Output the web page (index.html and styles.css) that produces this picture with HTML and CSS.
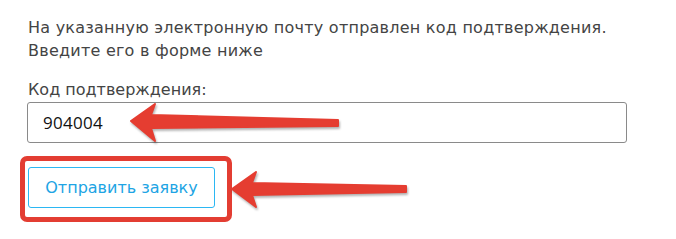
FILE: index.html
```html
<!DOCTYPE html>
<html lang="ru">

<head>
    <meta charset="utf-8">
    <link rel="stylesheet" href="styles.css">
</head>

<body>
    <div class="page">
        <p class="notice">На указанную электронную почту отправлен код подтверждения.<br>Введите его в форме ниже</p>
        <form class="confirm">
            <label class="confirm-label" for="code">Код подтверждения:</label>
            <input class="confirm-input" id="code" type="text" value="904004">
            <button class="confirm-btn" type="button">Отправить заявку</button>
        </form>
    </div>

    <!-- пометки поверх скриншота -->
    <span class="mark-box"></span>
    <svg class="marks" width="676" height="239" viewBox="0 0 676 239">
        <polygon class="arrow" points="131,121 155,104 151,115 338,120 338,126 151,128 155,141" />
        <polygon class="arrow" points="232,189 256,172 252,183 406,186 406,192 252,195 256,207" />
    </svg>
</body>

</html>
```

FILE: styles.css
```css
body {
    margin: 0;
    background: #fff;
    font-family: 'DejaVu Sans', Arial, sans-serif;
    color: #444;
}

.page {
    padding: 16px 27px 0 27px;
}

.notice {
    margin: 0 0 0 1px;
    font-size: 16px;
    letter-spacing: .24px;
    line-height: 23px;
}

.confirm-label {
    display: block;
    margin: 17px 0 1px 1px;
    font-size: 16px;
    letter-spacing: 0;
    line-height: 22px;
}

.confirm-input {
    display: block;
    box-sizing: border-box;
    width: 600px;
    height: 41px;
    margin: 0;
    padding: 0 0 0 15px;
    border: 1px solid #8a8a8a;
    border-radius: 3px;
    font-family: 'Open Sans', Arial, sans-serif;
    font-size: 17px;
    font-weight: 500;
    letter-spacing: .3px;
    color: #111;
    outline: none;
}

.confirm-btn {
    display: block;
    box-sizing: border-box;
    width: 187px;
    height: 41px;
    margin: 24px 0 0 1px;
    padding: 0;
    background: #fff;
    border: 1px solid #2bb7f3;
    border-radius: 3px;
    font-family: 'DejaVu Sans', Arial, sans-serif;
    font-size: 16px;
    color: #20a4e4;
}

.mark-box {
    position: absolute;
    left: 20px;
    top: 156px;
    width: 202px;
    height: 56px;
    border: 5px solid #e33d32;
    border-radius: 7px;
}

.marks {
    position: absolute;
    left: 0;
    top: 0;
    pointer-events: none;
}

.arrow {
    fill: #e53d31;
    stroke: #e53d31;
    stroke-width: 2;
    stroke-linejoin: round;
    filter: drop-shadow(1px 2px 1px rgba(0, 0, 0, .3));
}
```
